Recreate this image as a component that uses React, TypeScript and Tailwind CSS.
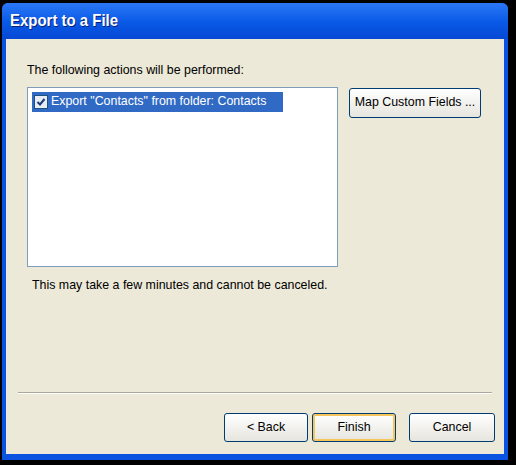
export default function App() {
  return (
    <div
      className="flex h-[465px] w-[516px] bg-black pb-[5px] pl-[2px] pr-[8px] pt-[3px]"
      style={{ fontFamily: '"Liberation Sans", Arial, sans-serif' }}
    >
      <div className="flex flex-1 flex-col rounded-t-[6px] bg-[#0a52e0]">
        <div className="flex h-[36px] items-center rounded-t-[6px] bg-gradient-to-b from-[#2a78f5] via-[#0a5be8] to-[#0648d4] pl-[8px]">
          <span
            className="inline-block origin-left scale-x-[0.88] text-[17px] font-bold text-white"
            style={{ textShadow: "1px 1px 0 #0a1f7a" }}
          >
            Export to a File
          </span>
        </div>
        <div className="mx-[4px] mb-[6px] flex flex-1 flex-col bg-[#ece9d8] text-[12.4px] text-black">
          <div className="pl-[21px] pt-[22px]">The following actions will be performed:</div>
          <div className="mt-[7px] flex items-start pl-[21px]">
            <div className="h-[180px] w-[311px] border border-[#7f9db9] bg-white p-[4px]">
              <div className="flex h-[20px] w-[251px] items-center gap-[3px] bg-[#316ac5] pl-[2px] text-white">
                <span className="flex h-[14px] w-[14px] items-center justify-center border border-[#1c5180] bg-[#e8ecf4]">
                  <svg width="10" height="10" viewBox="0 0 10 10">
                    <path d="M1.5 5 L4 7.5 L8.5 2" fill="none" stroke="#1a3a78" strokeWidth="2" />
                  </svg>
                </span>
                <span>Export "Contacts" from folder: Contacts</span>
              </div>
            </div>
            <button className="ml-[11px] mt-[1px] h-[30px] w-[132px] rounded-[3px] border border-[#003c74] bg-gradient-to-b from-white to-[#e6e5de]">
              Map Custom Fields ...
            </button>
          </div>
          <div className="pl-[26px] pt-[9px]">This may take a few minutes and cannot be canceled.</div>
          <div className="flex-1" />
          <div className="mx-[12px] h-[2px] border-t border-b border-t-[#aca899] border-b-white" />
          <div className="flex justify-end gap-[4px] pb-[12px] pr-[9px] pt-[19px]">
            <button className="h-[29px] w-[84px] rounded-[3px] border border-[#003c74] bg-gradient-to-b from-white to-[#e6e5de]">
              &lt; Back
            </button>
            <button className="h-[29px] w-[84px] rounded-[3px] border border-[#003c74] bg-gradient-to-b from-white to-[#e6e5de] shadow-[inset_0_0_0_2px_#f6c65a]">
              Finish
            </button>
            <button className="ml-[9px] h-[29px] w-[86px] rounded-[3px] border border-[#003c74] bg-gradient-to-b from-white to-[#e6e5de]">
              Cancel
            </button>
          </div>
        </div>
      </div>
    </div>
  );
}
